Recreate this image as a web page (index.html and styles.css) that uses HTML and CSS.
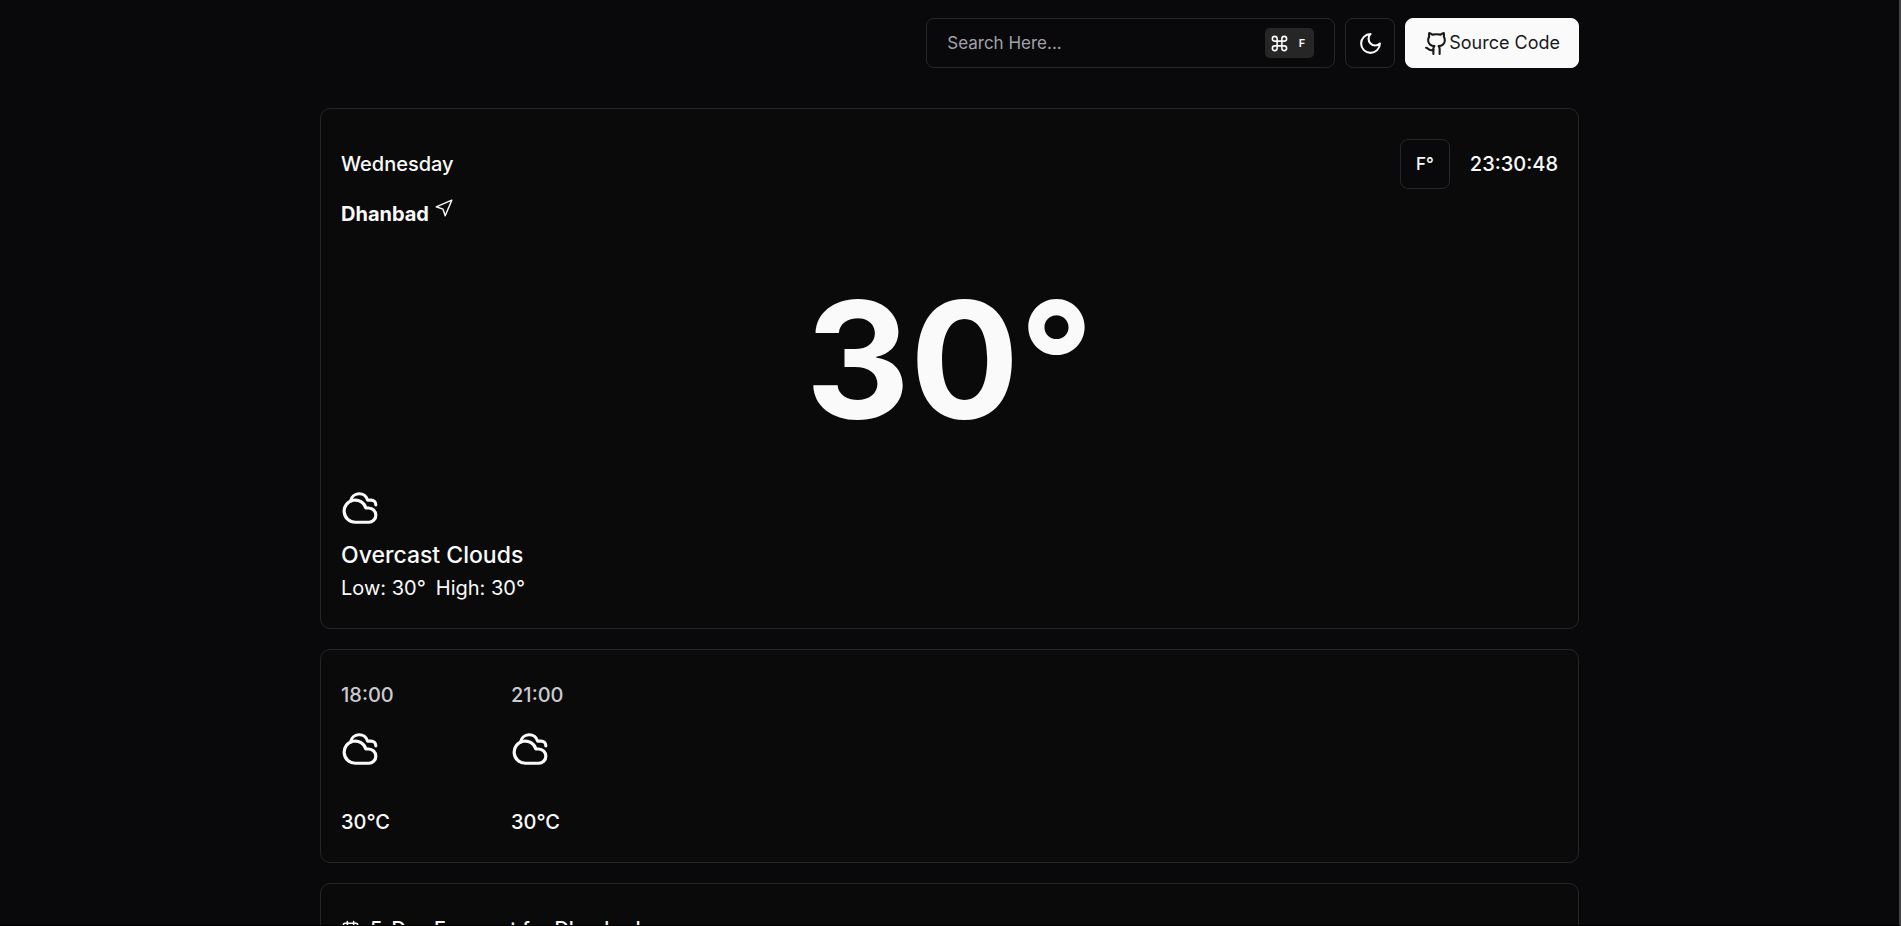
FILE: index.html
```
<!DOCTYPE html>
<html lang="en">
<head>
<meta charset="utf-8">
<meta name="viewport" content="width=device-width, initial-scale=1">
<title>Weather</title>
<link rel="stylesheet" href="styles.css">
</head>
<body>
<svg class="sprite" aria-hidden="true">
  <symbol id="cloudy" viewBox="0 0 24 24"><path d="M17.5 21H9a7 7 0 1 1 6.71-9h1.79a4.5 4.5 0 1 1 0 9Z"/><path d="M22 10a3 3 0 0 0-3-3h-2.207a5.502 5.502 0 0 0-10.702.5"/></symbol>
</svg>
<div class="page">
  <header class="container topbar">
    <button class="button search" type="button">
      <span>Search Here...</span>
      <kbd class="shortcut">
        <svg class="icon icon-command" viewBox="0 0 24 24" aria-label="Command"><path d="M15 6v12a3 3 0 1 0 3-3H6a3 3 0 1 0 3 3V6a3 3 0 1 0-3 3h12a3 3 0 1 0-3-3"/></svg>
        <span>F</span>
      </kbd>
    </button>
    <button class="button square" type="button" aria-label="Toggle theme">
      <svg class="icon icon-md" viewBox="0 0 24 24"><path d="M12 3a6 6 0 0 0 9 9 9 9 0 1 1-9-9Z"/></svg>
    </button>
    <a class="button source" href="#">
      <svg class="icon icon-md" viewBox="0 0 24 24" aria-hidden="true"><path d="M15 22v-4a4.8 4.8 0 0 0-1-3.5c3 0 6-2 6-5.5.08-1.25-.27-2.48-1-3.5.28-1.15.28-2.35 0-3.5 0 0-1 0-3 1.5-2.64-.5-5.36-.5-8 0C6 2 5 2 5 2c-.3 1.15-.3 2.35 0 3.5A5.403 5.403 0 0 0 4 9c0 3.5 3 5.5 6 5.5-.39.49-.68 1.05-.85 1.65-.17.6-.22 1.23-.15 1.85v4"/><path d="M9 18c-4.51 2-5-2-7-2"/></svg>
      <span>Source Code</span>
    </a>
  </header>

  <main class="container cards">
    <section class="card current">
      <div class="row">
        <span class="day">Wednesday</span>
        <div class="clock">
          <button class="button square" type="button">F°</button>
          <time>23:30:48</time>
        </div>
      </div>
      <h1 class="city">Dhanbad
        <svg class="icon icon-nav" viewBox="0 0 15 15" aria-hidden="true"><path d="M14 1 1 6.500l5.600 1.900L8.500 14Z"/></svg>
      </h1>
      <div class="temperature">30°</div>
      <svg class="icon icon-weather" aria-hidden="true"><use href="#cloudy"/></svg>
      <h2 class="condition">Overcast Clouds</h2>
      <p class="range"><span>Low: 30°</span><span>High: 30°</span></p>
    </section>

    <section class="card hourly">
      <div class="hour">
        <time>18:00</time>
        <svg class="icon icon-weather" aria-hidden="true"><use href="#cloudy"/></svg>
        <span>30°C</span>
      </div>
      <div class="hour">
        <time>21:00</time>
        <svg class="icon icon-weather" aria-hidden="true"><use href="#cloudy"/></svg>
        <span>30°C</span>
      </div>
    </section>

    <section class="card forecast">
      <h2 class="forecast-title">
        <svg class="icon icon-calendar" viewBox="0 0 24 24" aria-hidden="true"><rect x="3" y="4" width="18" height="18" rx="2"/><path d="M16 2v4M8 2v4M3 10h18"/></svg>
        <span>5-Day Forecast for Dhanbad</span>
      </h2>
    </section>
  </main>
</div>
</body>
</html>
```
FILE: styles.css
```
* { box-sizing: border-box; }

body {
  margin: 0;
  background: #09090b;
  color: #fafafa;
  font-family: Inter, "Liberation Sans", sans-serif;
  font-size: 20px;
  line-height: 30px;
}

h1, h2, p { margin: 0; font-size: inherit; }

.sprite { position: absolute; width: 0; height: 0; }

.page {
  height: 100vh;
  overflow: hidden;
  border-right: 2px solid #424242;
  border-bottom: 1px solid #000;
}

.container {
  width: calc(100% - 40px);
  max-width: 1259px;
  margin: 0 auto;
}

.icon {
  flex: none;
  display: block;
  fill: none;
  stroke: currentColor;
  stroke-width: 2;
  stroke-linecap: round;
  stroke-linejoin: round;
}
.icon-command { width: 19px; height: 19px; }
.icon-md { width: 25px; height: 25px; }
.icon-weather { width: 38px; height: 38px; }
.icon-calendar { width: 19px; height: 19px; }
.icon-nav { width: 18px; height: 18px; stroke-width: 1.2; }

.topbar {
  display: flex;
  justify-content: flex-end;
  gap: 10px;
  padding: 18px 0 40px;
}

.button {
  display: inline-flex;
  align-items: center;
  height: 50px;
  padding: 0 20px;
  border: 1px solid #27272a;
  border-radius: 8px;
  background: #09090b;
  color: inherit;
  font: inherit;
  font-size: 17px;
  text-decoration: none;
}
.square {
  justify-content: center;
  width: 50px;
  padding: 0;
  font-weight: 500;
}
.search {
  justify-content: space-between;
  width: 409px;
  color: #a1a1aa;
}
.source {
  padding: 0 18px;
  border-color: #fafafa;
  background: #fafafa;
  color: #18181b;
  font-size: 18px;
}

.shortcut {
  display: flex;
  align-items: center;
  justify-content: space-between;
  width: 49px;
  height: 30px;
  padding: 0 9px 0 5px;
  border-radius: 5px;
  background: #262626;
  color: #fafafa;
  font: 600 11px/30px Inter, sans-serif;
}

.cards {
  display: flex;
  flex-direction: column;
  gap: 20px;
}
.card {
  padding: 30px 20px 25px;
  border: 1px solid #262626;
  border-radius: 10px;
  background: #0a0a0a;
}

.row {
  display: flex;
  align-items: center;
  justify-content: space-between;
  font-weight: 500;
}
.clock { display: flex; align-items: center; gap: 20px; }

.city {
  display: flex;
  gap: 6px;
  margin-top: 10px;
  font-weight: 700;
}
.temperature {
  padding: 50px 0 30px;
  font-size: 162px;
  font-weight: 700;
  line-height: 160px;
  text-align: center;
}
.current .icon-weather { margin-top: 20px; }
.condition {
  margin-top: 10px;
  font-size: 23px;
  font-weight: 500;
  line-height: 36px;
}
.range { display: flex; gap: 10px; }

.hourly { display: flex; gap: 100px; font-weight: 500; }
.hour {
  display: flex;
  flex-direction: column;
  width: 70px;
}
.hour time { color: #c9cbd1; }
.hour .icon { margin: 20px 0 39px; }

.forecast-title {
  display: flex;
  align-items: center;
  gap: 10px;
  font-weight: 500;
}
```
